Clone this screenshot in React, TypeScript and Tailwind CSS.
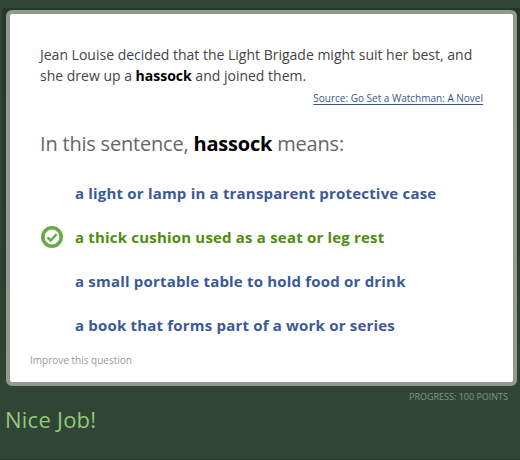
import React from "react";

const CheckIcon = () => (
  <svg viewBox="0 0 24 24" className="h-6 w-6" fill="none" stroke="#6aaa46">
    <circle cx="12" cy="12" r="9.2" strokeWidth="3.6" />
    <path d="M7.4 12.4l3.2 3.1 6.1-6.5" strokeWidth="2.5" />
  </svg>
);

const choices = [
  { text: "a light or lamp in a transparent protective case", correct: false },
  { text: "a thick cushion used as a seat or leg rest", correct: true },
  { text: "a small portable table to hold food or drink", correct: false },
  { text: "a book that forms part of a work or series", correct: false },
];

const App = () => {
  return (
    <main className="flex h-[460px] w-[520px] flex-col overflow-hidden border-b border-[#28392d] bg-[#304535] pt-[8px] font-['Open_Sans',sans-serif]">
      {/* Darker backing behind the card, fading into the page */}
      <div className="ml-[2px] bg-linear-to-b from-[#26372b] via-[#28392d] to-[#304535] pt-[2px] pl-[4px]">
        <section className="flex h-[376px] w-[511px] flex-col rounded-[6px] border-4 border-[#909a90] bg-white">
          <p className="mt-[30px] ml-[30px] text-[14px] leading-[21px] whitespace-nowrap text-[#444]">
            Jean Louise decided that the Light Brigade might suit her best, and
            <br />
            she drew up a <strong className="text-black">hassock</strong> and joined them.
          </p>
          <a className="mt-[5px] mr-[30px] self-end text-[10px] leading-[14px] text-[#3b5488] underline underline-offset-2">
            Source: Go Set a Watchman: A Novel
          </a>
          <h1 className="mt-[25px] ml-[30px] text-[20px] leading-[28px] tracking-[-0.2px] text-[#666]">
            In this sentence, <strong className="text-black">hassock</strong> means:
          </h1>
          <ul className="mt-[13px] ml-[30px]">
            {choices.map(({ text, correct }) => (
              <li key={text} className="flex h-11 items-center text-[15px] font-bold tracking-[0.19px] text-[#3b5998]">
                <span className="w-[35px]">{correct && <CheckIcon />}</span>
                <span className={correct ? "text-[#4f8c10]" : ""}>{text}</span>
              </li>
            ))}
          </ul>
          <a className="mt-[6px] ml-[20px] text-[10px] leading-[14px] text-[#999]">Improve this question</a>
        </section>
      </div>
      <p className="mt-[4px] mr-[12px] self-end text-[9px] leading-[14px] text-[#82958a]">PROGRESS: 100 POINTS</p>
      <p className="ml-[5px] text-[22px] leading-[31px] tracking-[0.25px] text-[#93c97a]">Nice Job!</p>
    </main>
  );
};

export default App;
